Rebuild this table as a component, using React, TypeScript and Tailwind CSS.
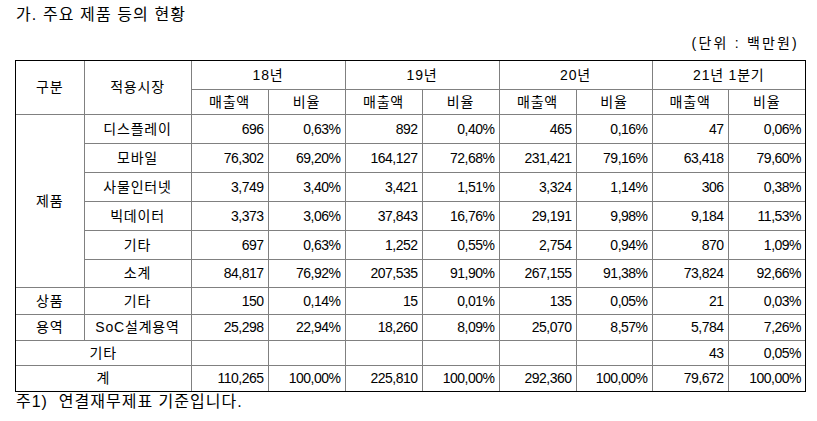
import React from "react";

type Row = { vals: string[] };

const productRows: { name: string; vals: string[] }[] = [
  { name: "디스플레이", vals: ["696", "0,63%", "892", "0,40%", "465", "0,16%", "47", "0,06%"] },
  { name: "모바일", vals: ["76,302", "69,20%", "164,127", "72,68%", "231,421", "79,16%", "63,418", "79,60%"] },
  { name: "사물인터넷", vals: ["3,749", "3,40%", "3,421", "1,51%", "3,324", "1,14%", "306", "0,38%"] },
  { name: "빅데이터", vals: ["3,373", "3,06%", "37,843", "16,76%", "29,191", "9,98%", "9,184", "11,53%"] },
  { name: "기타", vals: ["697", "0,63%", "1,252", "0,55%", "2,754", "0,94%", "870", "1,09%"] },
  { name: "소계", vals: ["84,817", "76,92%", "207,535", "91,90%", "267,155", "91,38%", "73,824", "92,66%"] },
];

const cell = "border border-[#808080] p-0";
const kor = `${cell} text-center text-[14px] tracking-[0.8px] leading-[16px]`;
const num = `${cell} text-right pr-[4px] text-[14px] tracking-[-0.5px] leading-[16px]`;

function Nums({ vals }: Row) {
  return (
    <>
      {vals.map((v, i) => (
        <td key={i} className={num}>
          {v}
        </td>
      ))}
    </>
  );
}

export default function App() {
  return (
    <div className="w-[817px] h-[421px] bg-white text-black font-['Liberation_Sans','Noto_Sans_CJK_KR',sans-serif] overflow-hidden">
      <div className="pl-[16px] pt-[5px] text-[16px] leading-[20px] tracking-[1.1px] whitespace-pre">가. 주요 제품 등의 현황</div>
      <div className="mt-[9px] pr-[18px] text-right text-[14px] leading-[18px] tracking-[2.2px] whitespace-pre">(단위 : 백만원)</div>
      <div className="mt-[8px] ml-[15px] w-[791px] border border-black">
        <table className="w-full table-fixed border-collapse border-hidden">
          <colgroup>
            <col className="w-[68px]" />
            <col className="w-[107px]" />
            <col className="w-[77px]" />
            <col className="w-[77px]" />
            <col className="w-[77px]" />
            <col className="w-[77px]" />
            <col className="w-[77px]" />
            <col className="w-[76px]" />
            <col className="w-[76px]" />
            <col className="w-[77px]" />
          </colgroup>
          <tbody>
            <tr className="h-[28px]">
              <td rowSpan={2} className={kor}>구분</td>
              <td rowSpan={2} className={kor}>적용시장</td>
              <td colSpan={2} className={kor}>18년</td>
              <td colSpan={2} className={kor}>19년</td>
              <td colSpan={2} className={kor}>20년</td>
              <td colSpan={2} className={kor}>21년 1분기</td>
            </tr>
            <tr className="h-[25px]">
              <td className={kor}>매출액</td>
              <td className={kor}>비율</td>
              <td className={kor}>매출액</td>
              <td className={kor}>비율</td>
              <td className={kor}>매출액</td>
              <td className={kor}>비율</td>
              <td className={kor}>매출액</td>
              <td className={kor}>비율</td>
            </tr>
            {productRows.map((r, i) => (
              <tr key={r.name + i} className={i === 5 ? "h-[28px]" : "h-[29px]"}>
                {i === 0 && (
                  <td rowSpan={6} className={kor}>
                    제품
                  </td>
                )}
                <td className={kor}>{r.name}</td>
                <Nums vals={r.vals} />
              </tr>
            ))}
            <tr className="h-[27px]">
              <td className={kor}>상품</td>
              <td className={kor}>기타</td>
              <Nums vals={["150", "0,14%", "15", "0,01%", "135", "0,05%", "21", "0,03%"]} />
            </tr>
            <tr className="h-[26px]">
              <td className={kor}>용역</td>
              <td className={kor}>SoC설계용역</td>
              <Nums vals={["25,298", "22,94%", "18,260", "8,09%", "25,070", "8,57%", "5,784", "7,26%"]} />
            </tr>
            <tr className="h-[25px]">
              <td colSpan={2} className={kor}>기타</td>
              <Nums vals={["", "", "", "", "", "", "43", "0,05%"]} />
            </tr>
            <tr className="h-[26px]">
              <td colSpan={2} className={kor}>계</td>
              <Nums vals={["110,265", "100,00%", "225,810", "100,00%", "292,360", "100,00%", "79,672", "100,00%"]} />
            </tr>
          </tbody>
        </table>
      </div>
      <div className="pl-[16px] text-[16px] leading-[20px] tracking-[1px] whitespace-pre">주1)  연결재무제표 기준입니다.</div>
    </div>
  );
}
